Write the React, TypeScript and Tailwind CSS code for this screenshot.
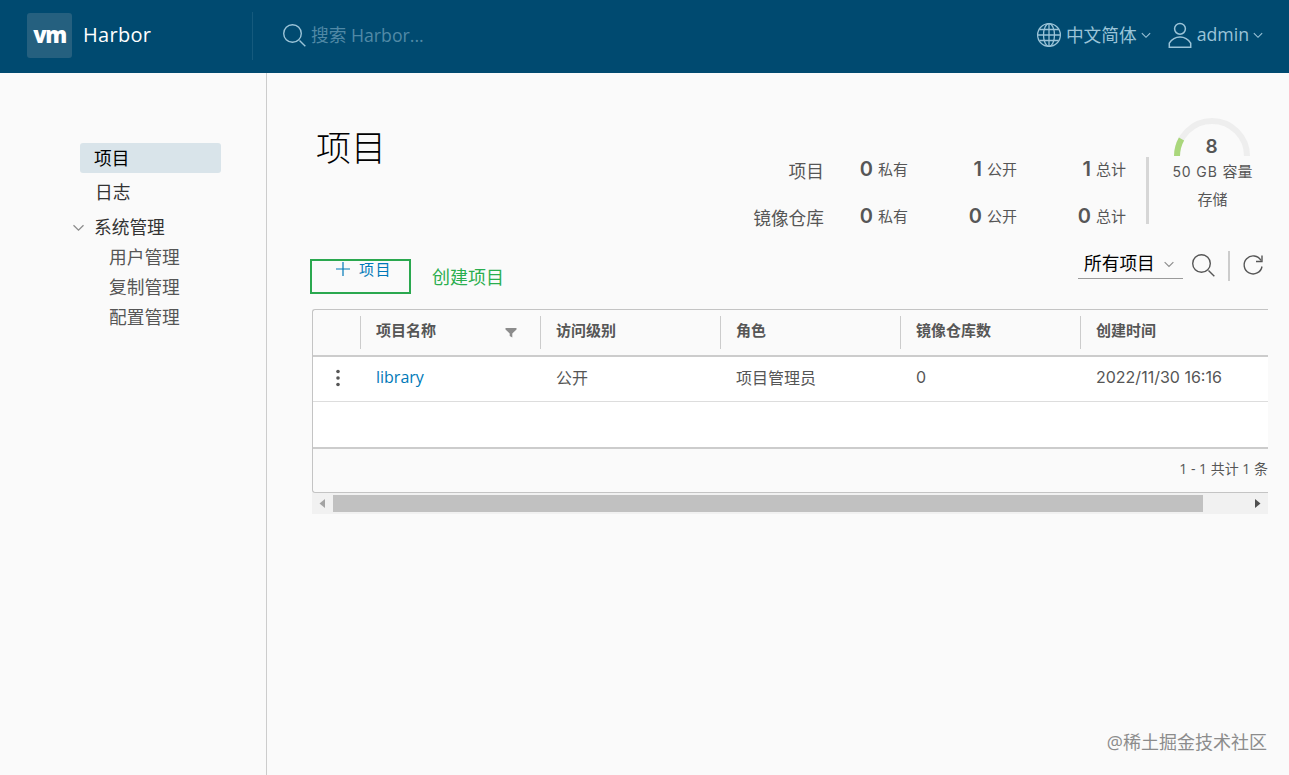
import { ReactNode } from 'react';

const columns = ['访问级别', '角色', '镜像仓库数'];

const stats = [
  { label: '项目', values: [0, 1, 1] },
  { label: '镜像仓库', values: [0, 0, 0] },
];

const statNames = ['私有', '公开', '总计'];

function ChevronDown({ className }: { className?: string }) {
  return (
    <svg className={className} viewBox="0 0 12 8" fill="none" stroke="currentColor" strokeWidth="1.3">
      <path d="M1 1.2l5 5 5-5" />
    </svg>
  );
}

function SearchIcon({ className }: { className?: string }) {
  return (
    <svg className={className} viewBox="0 0 24 24" fill="none" stroke="currentColor" strokeWidth="1.4">
      <circle cx="9.5" cy="9.5" r="8.8" />
      <path d="M16.5 16.5l5.8 5.8" />
    </svg>
  );
}

function Header() {
  return (
    <header className="flex h-[73px] items-center bg-[#004a70] pb-[2px] text-[#9bc4d8]">
      <div className="flex w-[252px] items-center pl-[27px]">
        <div className="flex h-[45px] w-[45px] items-center justify-center rounded-[3px] bg-[#25607f]">
          <span className="pb-[3px] text-[22px] leading-none font-extrabold tracking-[-1.5px] text-white">vm</span>
        </div>
        <span className="ml-[11px] pb-[1px] text-[20px] tracking-[0.3px] text-white">Harbor</span>
      </div>
      <div className="flex h-[48px] flex-1 items-center border-l border-[#155a7d] pl-[30px]">
        <SearchIcon className="h-[24px] w-[24px]" />
        <span className="ml-[4px] text-[17.7px] text-[#5189a6]">搜索 Harbor...</span>
      </div>
      <div className="flex items-center pr-[26px] text-[17.7px]">
        <svg className="h-[26px] w-[26px]" viewBox="0 0 26 26" fill="none" stroke="currentColor" strokeWidth="1.3">
          <circle cx="13" cy="13" r="11.4" />
          <ellipse cx="13" cy="13" rx="5.5" ry="11.4" />
          <path d="M13 1.6v22.8M1.6 13h22.8M3.5 7.5h19M3.5 18.5h19" />
        </svg>
        <span className="ml-[4px] pb-[1px]">中文简体</span>
        <ChevronDown className="ml-[4px] h-[7px] w-[10px]" />
        <svg className="ml-[17px] h-[27px] w-[24px]" viewBox="0 0 24 27" fill="none" stroke="currentColor" strokeWidth="1.5">
          <circle cx="12" cy="6.8" r="5.4" />
          <path d="M1.3 25.3v-4.2c2.6-4.1 6.3-6.2 10.7-6.2s8.1 2.1 10.7 6.2v4.2z" />
        </svg>
        <span className="ml-[5px] pb-[2px] font-medium">admin</span>
        <ChevronDown className="ml-[4px] h-[7px] w-[10px]" />
      </div>
    </header>
  );
}

function Sidebar() {
  return (
    <nav className="w-[267px] shrink-0 border-r border-[#ccc] pt-[70px] pl-[80px] text-[17.7px] text-[#333]">
      <div className="h-[30px] w-[141px] rounded-[3px] bg-[#d9e4ea] pl-[14px] leading-[30px] text-black">项目</div>
      <div className="mt-[5px] h-[30px] pl-[15px] leading-[29px]">日志</div>
      <div className="mt-[5px] -ml-[8px] flex h-[29px] items-center">
        <ChevronDown className="h-[8px] w-[13px] text-[#8c8c8c]" />
        <span className="ml-[9px] pb-[2px] leading-[28px]">系统管理</span>
      </div>
      <ul className="pl-[29px] leading-[30px] text-[#565656]">
        <li>用户管理</li>
        <li>复制管理</li>
        <li>配置管理</li>
      </ul>
    </nav>
  );
}

function StorageGauge() {
  return (
    <div className="flex w-[125px] flex-col items-center pt-[44px] text-[15px]">
      <div className="relative h-[40px] w-[78px]">
        <svg className="h-full w-full" viewBox="0 0 78 40" fill="none" strokeWidth="6">
          <path d="M4 39a35 35 0 0 1 70 0" stroke="#eee" />
          <path d="M4 39a35 35 0 0 1 4.5-17" stroke="#aad77c" />
        </svg>
        <span className="absolute inset-x-0 top-[16px] text-center font-['Inter',sans-serif] text-[19px] leading-[28px] font-semibold">
          8
        </span>
      </div>
      <div className="pl-[2px] leading-[28px] whitespace-nowrap">
        <span className="font-['Inter',sans-serif] text-[14px] tracking-[0.9px]">50 GB </span>容量
      </div>
      <div className="-mt-[1px] pl-[2px] leading-[28px]">存储</div>
    </div>
  );
}

function Summary() {
  return (
    <div className="mr-[15px] flex text-[#565656]">
      <div className="pt-[72px]">
        {stats.map((row) => (
          <div key={row.label} className="flex h-[47px] items-center">
            <div className="w-[74px] pt-[5px] text-right text-[17.7px]">{row.label}</div>
            <div className="grid grid-cols-[84px_109px_109px]">
              {row.values.map((value, i) => (
                <div key={i} className="flex items-center justify-end">
                  <span className="font-['Inter',sans-serif] text-[20px] leading-[24px] font-semibold">{value}</span>
                  <span className="ml-[5px] text-[15px] leading-[24px]">{statNames[i]}</span>
                </div>
              ))}
            </div>
          </div>
        ))}
      </div>
      <div className="mt-[84px] ml-[20px] h-[67px] w-[3px] bg-[#d6d6d6]" />
      <StorageGauge />
    </div>
  );
}

function Toolbar() {
  return (
    <div className="flex h-[59px] items-start justify-between">
      <div className="-ml-[2px] flex pt-[9px]">
        <button className="flex h-[35px] w-[101px] items-start border-2 border-[#2aa84f] pl-[23px] text-[15px] leading-[16px] tracking-[1.5px] text-[#0079b8]">
          <svg className="h-[16px] w-[16px]" viewBox="0 0 16 16" stroke="currentColor" strokeWidth="1.2">
            <path d="M8 1v14M1 8h14" />
          </svg>
          <span className="ml-[8px]">项目</span>
        </button>
        <span className="ml-[21px] text-[18px] leading-[36px] text-[#2aae4e]">创建项目</span>
      </div>
      <div className="flex items-start text-[#565656]">
        <div className="flex h-[29px] w-[105px] items-center border-b border-[#9a9a9a] pl-[6px] text-[17.7px] text-black">
          <span className="pb-[1px]">所有项目</span>
          <ChevronDown className="ml-[8px] h-[7px] w-[12px] text-[#8c8c8c]" />
        </div>
        <SearchIcon className="mt-[4px] ml-[9px] h-[24px] w-[24px]" />
        <div className="mt-[1px] ml-[12px] h-[30px] w-[2px] bg-[#ccc]" />
        <svg className="mt-[4px] mr-[4px] ml-[12px] h-[22px] w-[22px]" viewBox="0 0 22 22" fill="none" stroke="currentColor" strokeWidth="1.4">
          <path d="M19 6.5A9 9 0 1 0 20 12.5" />
          <path d="M20 1.5v6h-6" />
        </svg>
      </div>
    </div>
  );
}

function HeadCell({ children }: { children?: ReactNode }) {
  return (
    <div className="my-[6px] flex items-center border-l border-[#ccc] pb-[4px] pl-[15px] whitespace-nowrap">
      {children}
    </div>
  );
}

const gridCols = 'grid grid-cols-[47px_180px_180px_180px_180px_188px]';

function ProjectTable() {
  return (
    <div className="w-[956px] overflow-hidden text-[#565656]">
      <div className="rounded-l-[3px] border-y border-l border-[#c4c4c4]">
        <div className={`${gridCols} h-[47px] border-b-2 border-[#ccc] text-[15px] font-semibold`}>
          <div />
          <HeadCell>
            <span>项目名称</span>
            <svg className="mt-[4px] ml-[69px] h-[10px] w-[12px]" viewBox="0 0 12 10" fill="#8c8c8c">
              <path d="M.5 0h11v1.500L7.300 5.500V9.500L4.700 8V5.500L.5 1.500z" />
            </svg>
          </HeadCell>
          {columns.map((name) => (
            <HeadCell key={name}>{name}</HeadCell>
          ))}
          <HeadCell>创建时间</HeadCell>
        </div>
        <div className={`${gridCols} h-[45px] border-b border-[#ddd] bg-white text-[16px] leading-[41px]`}>
          <div className="flex items-center justify-center pb-[2px] pl-[3px]">
            <svg className="h-[18px] w-[4px]" viewBox="0 0 4 18" fill="#565656">
              <circle cx="2" cy="2.5" r="1.8" />
              <circle cx="2" cy="9" r="1.8" />
              <circle cx="2" cy="15.5" r="1.8" />
            </svg>
          </div>
          <a className="pl-[16px] text-[#0079b8]">library</a>
          <div className="pl-[16px] leading-[42px]">公开</div>
          <div className="pl-[16px] leading-[42px]">项目管理员</div>
          <div className="pl-[16px] font-['Inter',sans-serif]">0</div>
          <div className="pl-[16px] font-['Inter',sans-serif]">2022/11/30 16:16</div>
        </div>
        <div className="h-[47px] border-b-2 border-[#ccc] bg-white" />
        <div className="flex h-[43px] justify-end text-[14px] leading-[40px]">1 - 1 共计 1 条</div>
      </div>
      <div className="flex h-[21px] items-center justify-between bg-[#f1f1f1]">
        <svg className="ml-[7px] h-[9px] w-[6px]" viewBox="0 0 6 9" fill="#a3a3a3">
          <path d="M6 0v9L.5 4.5z" />
        </svg>
        <div className="mr-auto ml-[8px] h-[17px] w-[870px] bg-[#c1c1c1]" />
        <svg className="mr-[7px] h-[9px] w-[6px]" viewBox="0 0 6 9" fill="#505050">
          <path d="M0 0v9l5.5-4.5z" />
        </svg>
      </div>
    </div>
  );
}

export default function App() {
  return (
    <div className="flex h-[775px] w-[1289px] flex-col overflow-hidden bg-[#fafafa] font-['Open_Sans','Noto_Sans_CJK_SC',sans-serif]">
      <Header />
      <div className="flex flex-1">
        <Sidebar />
        <main className="flex flex-1 flex-col pl-[45px]">
          <div className="flex h-[177px] justify-between">
            <h1 className="pt-[48px] pl-[4px] text-[35px] leading-[54px] font-light text-black">项目</h1>
            <Summary />
          </div>
          <div className="w-[956px]">
            <Toolbar />
          </div>
          <ProjectTable />
          <footer className="mt-auto mr-[22px] mb-[19px] text-right text-[18px] leading-[27px] text-[#8c8c8c]">
            @稀土掘金技术社区
          </footer>
        </main>
      </div>
    </div>
  );
}
